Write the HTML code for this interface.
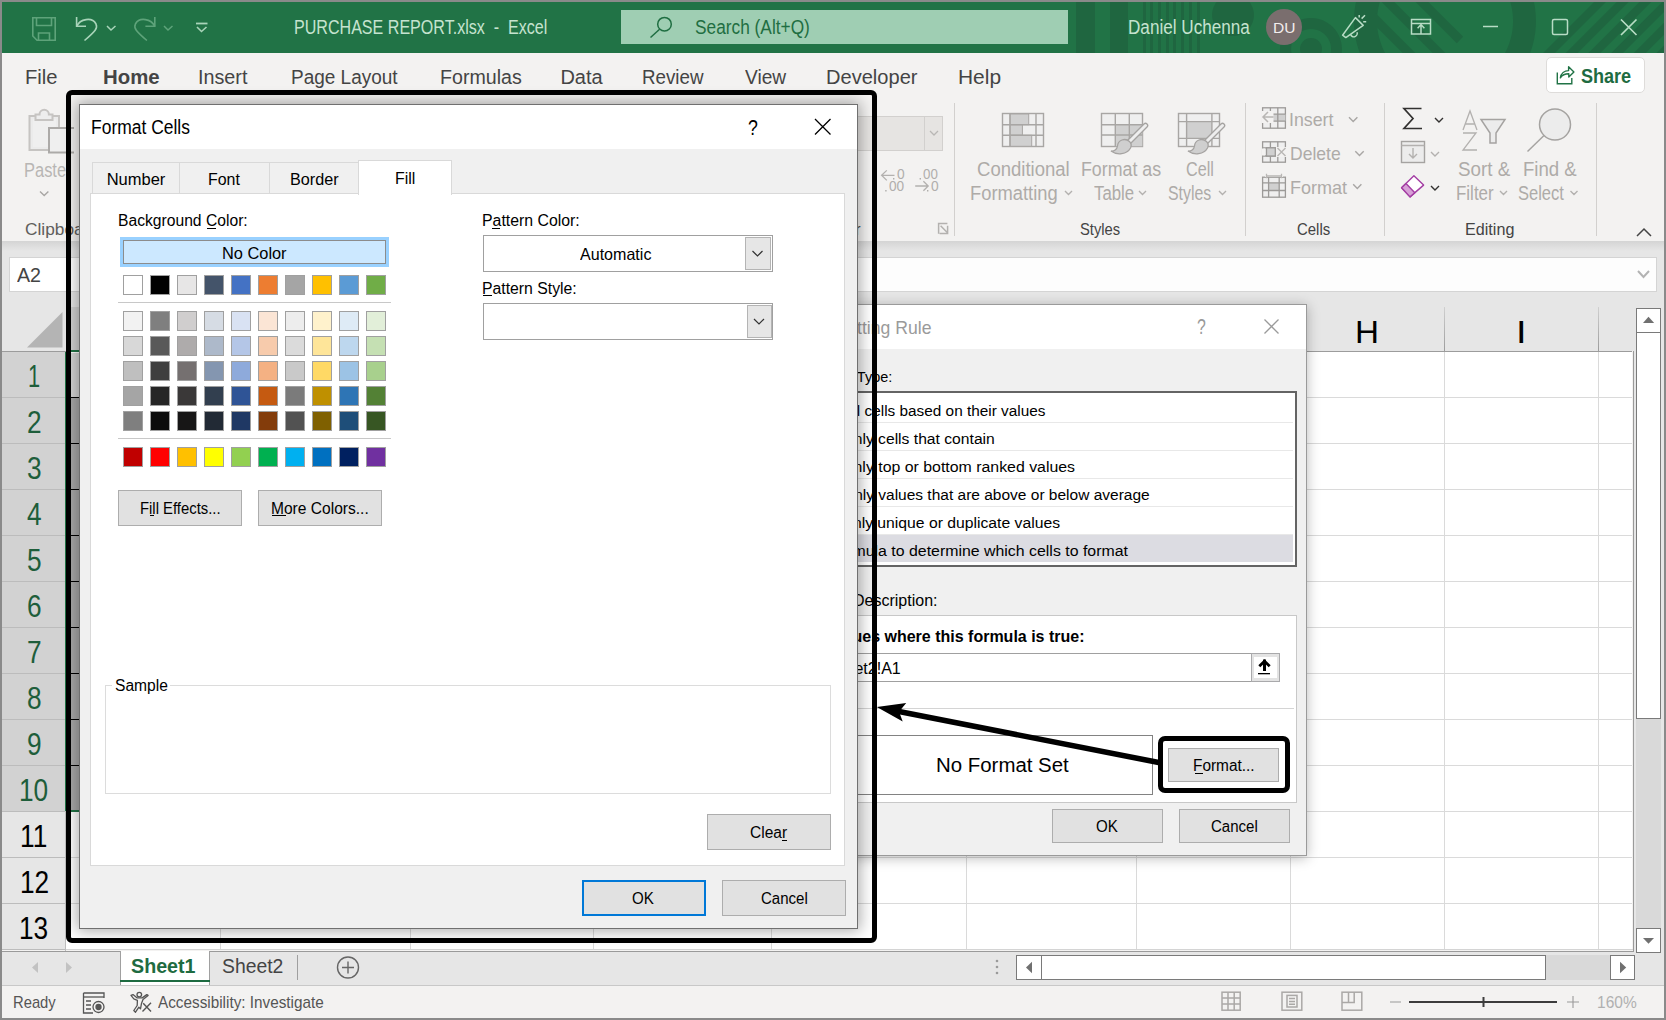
<!DOCTYPE html>
<html><head><meta charset="utf-8"><title>Excel - Format Cells</title>
<style>
html,body{margin:0;padding:0;width:1666px;height:1020px;overflow:hidden;background:#f3f2f1}
body{position:relative;font-family:"Liberation Sans",sans-serif}
.a{position:absolute}
.t{position:absolute;white-space:pre}
</style></head><body>
<div class="a" style="left:0px;top:0px;width:1666px;height:53px;background:#217346;"></div>
<svg class="a" style="left:0;top:0" width="1666" height="53" viewBox="0 0 1666 53">
<defs><clipPath id="tb"><rect x="0" y="2" width="1664" height="51"/></clipPath></defs>
<g clip-path="url(#tb)" fill="#1f6640">
<rect x="1076" y="0" width="19" height="53"/><rect x="1110" y="0" width="18" height="53"/>
<rect x="1143" y="0" width="3" height="53"/><rect x="1150" y="0" width="3" height="53"/><rect x="1158" y="0" width="3" height="53"/>
<rect x="1166" y="0" width="3" height="53"/><rect x="1173" y="0" width="3" height="53"/><rect x="1181" y="0" width="3" height="53"/>
<rect x="1189" y="0" width="3" height="53"/><rect x="1197" y="0" width="3" height="53"/>
<circle cx="1233" cy="15" r="21"/>
<path d="M1311 18 A31 31 0 1 1 1310.9 18 Z M1311 29 A20 20 0 1 0 1311.1 29 Z" fill-rule="evenodd"/>
<circle cx="1311" cy="49" r="11"/>
<path d="M1445 -70 A91 91 0 1 1 1444.9 -70 Z M1445 -47 A68 68 0 1 0 1445.1 -47 Z" fill-rule="evenodd"/>
<g fill="none" stroke="#1f6640" stroke-width="13">
<path d="M1366 10 L1426 70 M1383 -3 L1443 57 M1400 -20 L1460 40" stroke-width="9"/>
<path d="M1544.0 58 L1604.0 -2 M1566.7 58 L1626.7 -2 M1589.4 58 L1649.4 -2 M1612.1 58 L1672.1 -2 M1634.8 58 L1694.8 -2 M1657.5 58 L1717.5 -2" stroke-width="8.4"/>
</g>
</g>
</svg>
<svg class="a" style="left:0;top:0" width="240" height="53" viewBox="0 0 240 53" fill="none" stroke-width="1.6">
<g stroke="#5ea37a">
<path d="M32.8 17.8 H55.2 V40.2 H37 L32.8 36 Z"/>
<path d="M36.5 17.8 V25.5 H51.5 V17.8"/>
<path d="M38.5 40.2 V33 H49.5 V40.2"/>
</g>
<g stroke="#a9d4b9">
<path d="M76.6 17 V26.3 H86"/>
<path d="M76.6 26.3 C80 19 92 16.5 96 24 C98 28 95.5 31 84.5 40.5"/>
<path d="M107 26 L111 30 L115.5 26" stroke-width="1.5"/>
</g>
<g stroke="#5ea37a">
<path d="M154.8 17 V26.3 H145.4"/>
<path d="M154.8 26.3 C151.4 19 139.4 16.5 135.4 24 C133.4 28 135.9 31 146.9 40.5"/>
<path d="M164 26 L168 30 L172.5 26" stroke-width="1.5"/>
</g>
<g stroke="#a9d4b9">
<path d="M196 23.5 H207.5" stroke-width="1.8"/>
<path d="M197 27 L201.5 31.5 L206.5 27" stroke-width="1.6"/>
</g>
</svg>
<div class="t" style="left:293.71px;top:17px;font-size:20px;line-height:20px;color:#c5e3cf;transform:scaleX(0.8037);transform-origin:0 0;">PURCHASE REPORT.xlsx  -  Excel</div>
<div class="a" style="left:621px;top:10px;width:447px;height:34px;background:#9fceb3;"></div>
<svg class="a" style="left:640;top:10" width="40" height="36" viewBox="0 0 40 36" fill="none" stroke="#1f6e42" stroke-width="1.5">
<circle cx="24.5" cy="14.2" r="6.8"/><path d="M19.6 19.2 L10.5 27.5"/></svg>
<div class="t" style="left:694.72px;top:17px;font-size:20px;line-height:20px;color:#1f6e42;transform:scaleX(0.8646);transform-origin:0 0;">Search (Alt+Q)</div>
<div class="t" style="left:1127.63px;top:17px;font-size:20px;line-height:20px;color:#c5e3cf;transform:scaleX(0.8564);transform-origin:0 0;">Daniel Uchenna</div>
<div class="a" style="left:1266px;top:9px;width:36px;height:36px;border-radius:50%;background:#7a6e6e"></div>
<div class="t" style="left:1272.75px;top:20px;font-size:15.5px;line-height:15.5px;color:#f2eded;transform:scaleX(1.0041);transform-origin:0 0;">DU</div>
<svg class="a" style="left:1330;top:5" width="336" height="45" viewBox="1330 5 336 45" fill="none" stroke="#b8dcc5" stroke-width="1.5">
<path d="M1355.4 17.6 L1363.2 25.4 L1345.8 37.6 L1342.6 35.2 Z" stroke-linejoin="round"/><path d="M1350.6 34.6 A3.4 3.4 0 0 0 1357 32.2"/>
<path d="M1359.2 15 V17.6 M1361.6 18.6 L1365 15.2 M1363.2 21.8 H1366.2"/>
<rect x="1411.5" y="19.5" width="19" height="14.5"/><path d="M1411.5 23.5 H1430.5"/><path d="M1421 34 V24 M1417.6 28.2 L1421 24.6 L1424.4 28.2"/>
<path d="M1483 26.5 H1498"/>
<rect x="1552.5" y="19.5" width="15" height="15" rx="1.5"/>
<path d="M1621 19.5 L1636.5 35 M1636.5 19.5 L1621 35" stroke-width="1.7"/>
</svg>
<div class="a" style="left:0px;top:53px;width:1666px;height:188px;background:#f3f2f1;"></div>
<div class="t" style="left:25.38px;top:66.6px;font-size:20px;line-height:20px;color:#444;transform:scaleX(1.0101);transform-origin:0 0;">File</div>
<div class="t" style="left:102.68px;top:66.6px;font-size:20px;line-height:20px;color:#444;font-weight:700;transform:scaleX(1.0187);transform-origin:0 0;">Home</div>
<div class="t" style="left:198.22px;top:66.6px;font-size:20px;line-height:20px;color:#444;transform:scaleX(0.9875);transform-origin:0 0;">Insert</div>
<div class="t" style="left:290.98px;top:66.6px;font-size:20px;line-height:20px;color:#444;transform:scaleX(0.9494);transform-origin:0 0;">Page Layout</div>
<div class="t" style="left:439.93px;top:66.6px;font-size:20px;line-height:20px;color:#444;transform:scaleX(0.9803);transform-origin:0 0;">Formulas</div>
<div class="t" style="left:560.40px;top:66.6px;font-size:20px;line-height:20px;color:#444;">Data</div>
<div class="t" style="left:642.00px;top:66.6px;font-size:20px;line-height:20px;color:#444;transform:scaleX(0.9375);transform-origin:0 0;">Review</div>
<div class="t" style="left:744.90px;top:66.6px;font-size:20px;line-height:20px;color:#444;transform:scaleX(0.9557);transform-origin:0 0;">View</div>
<div class="t" style="left:826.39px;top:66.6px;font-size:20px;line-height:20px;color:#444;transform:scaleX(1.0034);transform-origin:0 0;">Developer</div>
<div class="t" style="left:958.33px;top:66.6px;font-size:20px;line-height:20px;color:#444;transform:scaleX(1.0465);transform-origin:0 0;">Help</div>
<div class="a" style="left:1546px;top:57px;width:99px;height:36px;background:#fff;border:1px solid #dedcda;box-sizing:border-box;border-radius:5px;"></div>
<svg class="a" style="left:1550;top:60" width="30" height="30" viewBox="1550 60 30 30" fill="none" stroke="#217346" stroke-width="1.4">
<path d="M1557.3 72.4 V83.8 H1571.8 V78.1"/>
<path d="M1560.4 77.8 C1561 73.2 1564.5 70.6 1568.6 70.6 V66.8 L1573.9 72 L1568.8 77 V73.8 C1565 73.8 1562 75.2 1560.4 77.8 Z" stroke-linejoin="round"/></svg>
<div class="t" style="left:1581.46px;top:65px;font-size:21px;line-height:21px;color:#1e6b41;font-weight:700;transform:scaleX(0.8594);transform-origin:0 0;">Share</div>
<svg class="a" style="left:14;top:100" width="60" height="110" viewBox="14 100 60 110" fill="none" stroke="#c6c4c2" stroke-width="2">
<rect x="29.5" y="116" width="29.5" height="34" fill="#ebebeb"/>
<rect x="33" y="119" width="23" height="28" fill="#efefef" stroke="none"/>
<path d="M35.5 114.5 H39.5 A4.7 4.7 0 0 1 48.9 114.5 H52.5 V120 H35.5 Z" fill="#ededed"/>
<rect x="49" y="128" width="30" height="24.5" fill="#efefef" stroke="#acaaa8"/>
<path d="M40 191.5 L44.2 195.5 L48.4 191.5" stroke="#a8a6a4" stroke-width="1.4"/></svg>
<div class="t" style="left:23.68px;top:160px;font-size:20px;line-height:20px;color:#b8b6b4;transform:scaleX(0.8230);transform-origin:0 0;">Paste</div>
<div class="t" style="left:25.14px;top:221px;font-size:17px;line-height:17px;color:#605e5c;transform:scaleX(1.0169);transform-origin:0 0;">Clipboard</div>
<div class="a" style="left:850px;top:116px;width:93px;height:35px;background:#e6e4e2;border:1px solid #d2d0ce;box-sizing:border-box;"></div>
<div class="a" style="left:924px;top:117px;width:1px;height:33px;background:#d2d0ce;"></div>
<svg class="a" style="left:925;top:117" width="18" height="33" viewBox="925 117 18 33" fill="none" stroke="#b9b7b5" stroke-width="1.3"><path d="M930 131 L934 135 L938 131"/></svg>
<svg class="a" style="left:875;top:165" width="80" height="80" viewBox="875 165 80 80" fill="none" stroke="#b3b1af" stroke-width="1.3">
<path d="M894.5 175.3 H881.5 M886.8 170.4 L881.6 175.3 L886.8 180.4"/><path d="M915.2 186 H928 M923.4 181.2 L928.2 186 L923.4 190.8"/>
<path d="M938.6 233.8 V223.6 H947.4 M940.6 225.8 L947 232.2 M939.6 233.6 H947.6 V225.8" stroke-width="1.5"/>
</svg>
<div class="t" style="left:896.65px;top:167.3px;font-size:14px;line-height:14px;color:#b0aeac;transform:scaleX(0.9821);transform-origin:0 0;">0</div>
<div class="t" style="left:889.16px;top:179.4px;font-size:14px;line-height:14px;color:#b0aeac;transform:scaleX(0.9731);transform-origin:0 0;">00</div>
<div class="t" style="left:923.27px;top:167.3px;font-size:14px;line-height:14px;color:#b0aeac;transform:scaleX(0.9524);transform-origin:0 0;">00</div>
<div class="t" style="left:930.75px;top:179.4px;font-size:14px;line-height:14px;color:#b0aeac;transform:scaleX(0.9821);transform-origin:0 0;">0</div>
<svg class="a" style="left:880;top:165" width="60" height="30" viewBox="880 165 60 30" fill="#b0aeac">
<rect x="893" y="178" width="1.4" height="1.5"/><rect x="885.2" y="190" width="1.4" height="1.5"/>
<rect x="919.6" y="178" width="1.4" height="1.5"/><rect x="927" y="190" width="1.4" height="1.5"/></svg>
<div class="t" style="left:804.23px;top:221px;font-size:17px;line-height:17px;color:#444;transform:scaleX(0.9351);transform-origin:0 0;">Number</div>
<div class="a" style="left:954px;top:103px;width:1px;height:133px;background:#d2d0ce;"></div>
<svg class="a" style="left:990;top:105" width="250" height="52" viewBox="990 105 250 52" fill="none" stroke="#a8a6a4" stroke-width="1.4">
<rect x="1002.5" y="113.5" width="41" height="33" fill="#efefef"/>
<rect x="1010" y="114" width="18.7" height="10.7" fill="#d0d0d0" stroke="#a8a6a4" stroke-width="1"/>
<rect x="1010" y="124.7" width="12.4" height="10.6" fill="#d0d0d0" stroke="#a8a6a4" stroke-width="1"/>
<rect x="1010" y="135.3" width="21.7" height="11" fill="#d0d0d0" stroke="#a8a6a4" stroke-width="1"/>
<path d="M1002.5 124.7 H1043.5 M1002.5 135.3 H1043.5 M1010 113.5 V146.5 M1036 113.5 V146.5"/>
<rect x="1101.5" y="113.5" width="41" height="33" fill="#efefef"/>
<rect x="1115.3" y="124.7" width="27" height="21.5" fill="#d0d0d0" stroke="none"/>
<path d="M1101.5 124.7 H1142.5 M1101.5 135 H1142.5 M1115.3 113.5 V146.5 M1129.3 113.5 V146.5"/>
<rect x="1178.5" y="113.5" width="41" height="33" fill="#efefef"/>
<rect x="1186.6" y="121.6" width="25.3" height="16.8" fill="#d0d0d0" stroke="none"/>
<path d="M1178.5 121.6 H1219.5 M1178.5 138.4 H1219.5 M1186.6 113.5 V146.5 M1211.9 113.5 V146.5"/>
<path d="M1145.5 125.5 L1127 144" stroke="#a5a3a1" stroke-width="5.6" stroke-linecap="round"/>
<path d="M1145.5 125.5 L1127 144" stroke="#eeeeee" stroke-width="3" stroke-linecap="round"/>
<path d="M1129.5 141.5 C1125 137.5 1118 140 1117.5 146 C1117 149.5 1114 151.5 1111 151 C1117 155.5 1127 154.5 1130.5 148 C1131.5 146 1131.5 143.5 1129.5 141.5 Z" fill="#cfcfcf" stroke="#a5a3a1" stroke-width="1.3"/>
<path d="M1222.5 125.5 L1204 144" stroke="#a5a3a1" stroke-width="5.6" stroke-linecap="round"/>
<path d="M1222.5 125.5 L1204 144" stroke="#eeeeee" stroke-width="3" stroke-linecap="round"/>
<path d="M1206.5 141.5 C1202 137.5 1195 140 1194.5 146 C1194 149.5 1191 151.5 1188 151 C1194 155.5 1204 154.5 1207.5 148 C1208.5 146 1208.5 143.5 1206.5 141.5 Z" fill="#cfcfcf" stroke="#a5a3a1" stroke-width="1.3"/>
</svg>
<div class="t" style="left:976.57px;top:159px;font-size:20px;line-height:20px;color:#aeaba8;transform:scaleX(0.9263);transform-origin:0 0;">Conditional</div>
<div class="t" style="left:969.83px;top:183px;font-size:20px;line-height:20px;color:#aeaba8;transform:scaleX(0.9169);transform-origin:0 0;">Formatting</div>
<div class="t" style="left:1081.08px;top:159px;font-size:20px;line-height:20px;color:#aeaba8;transform:scaleX(0.8894);transform-origin:0 0;">Format as</div>
<div class="t" style="left:1093.66px;top:183px;font-size:20px;line-height:20px;color:#aeaba8;transform:scaleX(0.8387);transform-origin:0 0;">Table</div>
<div class="t" style="left:1185.69px;top:159px;font-size:20px;line-height:20px;color:#aeaba8;transform:scaleX(0.8100);transform-origin:0 0;">Cell</div>
<div class="t" style="left:1167.79px;top:183px;font-size:20px;line-height:20px;color:#aeaba8;transform:scaleX(0.7940);transform-origin:0 0;">Styles</div>
<svg class="a" style="left:960;top:185" width="280" height="20" viewBox="960 185 280 20" fill="none" stroke="#b3b1af" stroke-width="1.4">
<path d="M1065 191 L1068.5 194.5 L1072 191"/><path d="M1139 191 L1142.5 194.5 L1146 191"/><path d="M1219 191 L1222.5 194.5 L1226 191"/></svg>
<div class="t" style="left:1079.84px;top:221px;font-size:17px;line-height:17px;color:#444;transform:scaleX(0.8673);transform-origin:0 0;">Styles</div>
<div class="a" style="left:1245px;top:103px;width:1px;height:133px;background:#d2d0ce;"></div>
<svg class="a" style="left:1255;top:100" width="120" height="110" viewBox="1255 100 120 110" fill="none" stroke="#9c9a98" stroke-width="1.3">
<rect x="1262.6" y="107.8" width="22.8" height="20.4" fill="#efefef"/>
<rect x="1270.4" y="114.2" width="15" height="6.9" fill="#d0d0d0" stroke="none"/>
<path d="M1262.6 114.2 H1285.4 M1262.6 121.1 H1285.4 M1270.4 107.8 V128.2 M1277.8 107.8 V128.2"/>
<rect x="1261.5" y="111" width="12" height="12" fill="#f3f2f1" stroke="none"/>
<path d="M1273.5 117 H1263 M1268 112 L1263 117 L1268 122" stroke="#b8b6b4" stroke-width="1.5"/>
<rect x="1262.6" y="141.8" width="22.8" height="20.4" fill="#efefef"/>
<path d="M1262.6 147.8 H1285.4 M1262.6 156 H1285.4 M1270.4 141.8 V162.2 M1277.8 141.8 V162.2"/>
<rect x="1262" y="148.5" width="3" height="7" fill="#f3f2f1" stroke="none"/>
<rect x="1276" y="147" width="11" height="10" fill="#f3f2f1" stroke="none"/>
<rect x="1266.5" y="147.8" width="8.8" height="8.2" fill="#d0d0d0"/>
<path d="M1277.5 148 L1285.5 156 M1285.5 148 L1277.5 156" stroke="#b8b6b4" stroke-width="1.4"/>
<rect x="1262.6" y="177.2" width="22.8" height="20" fill="#efefef"/>
<rect x="1268.6" y="182.8" width="10.6" height="7.7" fill="#d0d0d0" stroke="none"/>
<path d="M1262.6 182.8 H1285.4 M1262.6 190.5 H1285.4 M1268.6 177.2 V197.2 M1279.2 177.2 V197.2"/>
<rect x="1265" y="173" width="18" height="4" fill="#f3f2f1" stroke="none"/>
<path d="M1266.5 176 H1281.5 M1266.5 173.8 V178.2 M1281.5 173.8 V178.2" stroke="#b8b6b4"/>
<path d="M1349 117.2 L1353.2 121.4 L1357.4 117.2 M1355.3 151.2 L1359.5 155.4 L1363.7 151.2 M1353.2 184.3 L1357.3 188.5 L1361.4 184.3" stroke="#a8a6a4" stroke-width="1.4"/>
</svg>
<div class="t" style="left:1289.40px;top:109.7px;font-size:19px;line-height:19px;color:#aeaba8;transform:scaleX(0.9345);transform-origin:0 0;">Insert</div>
<div class="t" style="left:1289.60px;top:143.7px;font-size:19px;line-height:19px;color:#aeaba8;transform:scaleX(0.9232);transform-origin:0 0;">Delete</div>
<div class="t" style="left:1289.56px;top:177.8px;font-size:19px;line-height:19px;color:#aeaba8;transform:scaleX(0.9484);transform-origin:0 0;">Format</div>
<div class="t" style="left:1297.25px;top:221px;font-size:17px;line-height:17px;color:#444;transform:scaleX(0.8796);transform-origin:0 0;">Cells</div>
<div class="a" style="left:1384px;top:103px;width:1px;height:133px;background:#d2d0ce;"></div>
<svg class="a" style="left:1395;top:100" width="200" height="110" viewBox="1395 100 200 110" fill="none" stroke-width="1.4">
<path d="M1421.5 108.5 H1404 L1413 118.5 L1404 128.5 H1422" stroke="#323130" stroke-width="1.7"/>
<path d="M1435 118 L1439 122 L1443 118" stroke="#323130"/>
<rect x="1401.5" y="141.5" width="23" height="21" stroke="#a5a3a1" fill="#ececec"/><path d="M1401.5 145.5 H1424.5 M1413 148 V158 M1409 154 L1413 158 L1417 154" stroke="#b3b1af"/>
<path d="M1431 152 L1435 156 L1439 152" stroke="#b3b1af"/>
<path d="M1413.9 175.7 L1423.6 185.1 L1410 196.9 L1401.6 187.7 Z" stroke="#a33da3" fill="#fff" stroke-linejoin="round"/>
<path d="M1401.6 187.7 L1406 183.4 L1414.8 192.8 L1410 196.9 Z" fill="#d7a0d7" stroke="#a33da3" stroke-linejoin="round"/>
<path d="M1431 186 L1435 190 L1439 186" stroke="#323130"/>
<g stroke="#b3b1af" stroke-width="1.3">
<path d="M1463 130 L1470 111 L1477 130 M1465.5 124 H1474.5"/>
<path d="M1463 133 H1476 L1463 150 H1477"/>
<path d="M1481 119.5 H1505 L1496 133 V143 H1490 V133 Z" fill="#ececec" stroke="#a5a3a1" stroke-width="1.5"/>
<circle cx="1555" cy="124.5" r="15.5" fill="#ececec" stroke="#a5a3a1" stroke-width="1.5"/><path d="M1544 135.5 L1527.5 151.5" stroke="#a5a3a1" stroke-width="1.5"/>
<path d="M1570.5 191 L1574 194.5 L1577.5 191 M1500 191 L1503.5 194.5 L1507 191" stroke-width="1.4"/>
</g></svg>
<div class="t" style="left:1458.15px;top:159px;font-size:20px;line-height:20px;color:#aeaba8;transform:scaleX(0.9392);transform-origin:0 0;">Sort &amp;</div>
<div class="t" style="left:1456.14px;top:183px;font-size:20px;line-height:20px;color:#aeaba8;transform:scaleX(0.8471);transform-origin:0 0;">Filter</div>
<div class="t" style="left:1522.51px;top:159px;font-size:20px;line-height:20px;color:#aeaba8;transform:scaleX(0.9302);transform-origin:0 0;">Find &amp;</div>
<div class="t" style="left:1518.26px;top:183px;font-size:20px;line-height:20px;color:#aeaba8;transform:scaleX(0.8257);transform-origin:0 0;">Select</div>
<div class="t" style="left:1465.21px;top:221px;font-size:17px;line-height:17px;color:#444;transform:scaleX(0.9501);transform-origin:0 0;">Editing</div>
<div class="a" style="left:1596px;top:103px;width:1px;height:133px;background:#d2d0ce;"></div>
<svg class="a" style="left:1630;top:220" width="30" height="20" viewBox="1630 220 30 20" fill="none" stroke="#444" stroke-width="1.5"><path d="M1637 236 L1644 229 L1651 236"/></svg>
<div class="a" style="left:0px;top:241px;width:1666px;height:110px;background:#e6e6e6;"></div>
<div class="a" style="left:0;top:241px;width:1666px;height:10px;background:linear-gradient(#d4d4d4,#e6e6e6)"></div>
<div class="a" style="left:9px;top:257px;width:250px;height:35px;background:#fff;border:1px solid #d4d4d4;box-sizing:border-box;"></div>
<div class="t" style="left:16.50px;top:265px;font-size:20px;line-height:20px;color:#444;transform:scaleX(0.9829);transform-origin:0 0;">A2</div>
<div class="a" style="left:260px;top:257px;width:1397px;height:35px;background:#fdfdfd;border:1px solid #d4d4d4;box-sizing:border-box;"></div>
<svg class="a" style="left:1630;top:262" width="30" height="25" viewBox="1630 262 30 25" fill="none" stroke="#b3b3b3" stroke-width="2"><path d="M1638 271 L1643.5 277 L1649 271"/></svg>
<div class="a" style="left:2px;top:292px;width:1630px;height:59px;background:#e6e6e6;"></div>
<div class="a" style="left:2px;top:351px;width:64px;height:599px;background:#e6e6e6;"></div>
<div class="a" style="left:66px;top:351px;width:1566px;height:599px;background:#fff;"></div>
<div class="a" style="left:2px;top:351px;width:63px;height:460px;background:#d2d2d2;"></div>
<div class="a" style="left:65px;top:351px;width:1px;height:460px;background:#217346;"></div>
<div class="a" style="left:65px;top:811px;width:1px;height:140px;background:#bdbdbd;"></div>
<div class="a" style="left:66px;top:397px;width:1566px;height:1px;background:#dadada"></div><div class="a" style="left:2px;top:397px;width:63px;height:1px;background:#bcbcbc"></div><div class="a" style="left:66px;top:443px;width:1566px;height:1px;background:#dadada"></div><div class="a" style="left:2px;top:443px;width:63px;height:1px;background:#bcbcbc"></div><div class="a" style="left:66px;top:489px;width:1566px;height:1px;background:#dadada"></div><div class="a" style="left:2px;top:489px;width:63px;height:1px;background:#bcbcbc"></div><div class="a" style="left:66px;top:535px;width:1566px;height:1px;background:#dadada"></div><div class="a" style="left:2px;top:535px;width:63px;height:1px;background:#bcbcbc"></div><div class="a" style="left:66px;top:581px;width:1566px;height:1px;background:#dadada"></div><div class="a" style="left:2px;top:581px;width:63px;height:1px;background:#bcbcbc"></div><div class="a" style="left:66px;top:627px;width:1566px;height:1px;background:#dadada"></div><div class="a" style="left:2px;top:627px;width:63px;height:1px;background:#bcbcbc"></div><div class="a" style="left:66px;top:673px;width:1566px;height:1px;background:#dadada"></div><div class="a" style="left:2px;top:673px;width:63px;height:1px;background:#bcbcbc"></div><div class="a" style="left:66px;top:719px;width:1566px;height:1px;background:#dadada"></div><div class="a" style="left:2px;top:719px;width:63px;height:1px;background:#bcbcbc"></div><div class="a" style="left:66px;top:765px;width:1566px;height:1px;background:#dadada"></div><div class="a" style="left:2px;top:765px;width:63px;height:1px;background:#bcbcbc"></div><div class="a" style="left:66px;top:811px;width:1566px;height:1px;background:#dadada"></div><div class="a" style="left:2px;top:811px;width:63px;height:1px;background:#bcbcbc"></div><div class="a" style="left:66px;top:857px;width:1566px;height:1px;background:#dadada"></div><div class="a" style="left:2px;top:857px;width:63px;height:1px;background:#bcbcbc"></div><div class="a" style="left:66px;top:903px;width:1566px;height:1px;background:#dadada"></div><div class="a" style="left:2px;top:903px;width:63px;height:1px;background:#bcbcbc"></div><div class="a" style="left:66px;top:949px;width:1566px;height:1px;background:#dadada"></div><div class="a" style="left:2px;top:949px;width:63px;height:1px;background:#bcbcbc"></div><div class="a" style="left:220px;top:351px;width:1px;height:599px;background:#dadada"></div><div class="a" style="left:220px;top:307px;width:1px;height:44px;background:linear-gradient(#d0d0d0,#9c9c9c)"></div><div class="a" style="left:410px;top:351px;width:1px;height:599px;background:#dadada"></div><div class="a" style="left:410px;top:307px;width:1px;height:44px;background:linear-gradient(#d0d0d0,#9c9c9c)"></div><div class="a" style="left:593px;top:351px;width:1px;height:599px;background:#dadada"></div><div class="a" style="left:593px;top:307px;width:1px;height:44px;background:linear-gradient(#d0d0d0,#9c9c9c)"></div><div class="a" style="left:771px;top:351px;width:1px;height:599px;background:#dadada"></div><div class="a" style="left:771px;top:307px;width:1px;height:44px;background:linear-gradient(#d0d0d0,#9c9c9c)"></div><div class="a" style="left:966px;top:351px;width:1px;height:599px;background:#dadada"></div><div class="a" style="left:966px;top:307px;width:1px;height:44px;background:linear-gradient(#d0d0d0,#9c9c9c)"></div><div class="a" style="left:1136px;top:351px;width:1px;height:599px;background:#dadada"></div><div class="a" style="left:1136px;top:307px;width:1px;height:44px;background:linear-gradient(#d0d0d0,#9c9c9c)"></div><div class="a" style="left:1290px;top:351px;width:1px;height:599px;background:#dadada"></div><div class="a" style="left:1290px;top:307px;width:1px;height:44px;background:linear-gradient(#d0d0d0,#9c9c9c)"></div><div class="a" style="left:1444px;top:351px;width:1px;height:599px;background:#dadada"></div><div class="a" style="left:1444px;top:307px;width:1px;height:44px;background:linear-gradient(#d0d0d0,#9c9c9c)"></div><div class="a" style="left:1598px;top:351px;width:1px;height:599px;background:#dadada"></div><div class="a" style="left:1598px;top:307px;width:1px;height:44px;background:linear-gradient(#d0d0d0,#9c9c9c)"></div>
<div class="a" style="left:66px;top:351px;width:1566px;height:1px;background:#9c9c9c;"></div>
<div class="a" style="left:2px;top:351px;width:64px;height:1px;background:#9c9c9c;"></div>
<svg class="a" style="left:20;top:305" width="46" height="46" viewBox="20 305 46 46"><path d="M62.5 312 V347.5 H27 Z" fill="#b4b4b4"/></svg>
<div class="a" style="left:66px;top:307px;width:154px;height:44px;background:#d2d2d2;"></div>
<div class="a" style="left:66px;top:350px;width:154px;height:2px;background:#217346;"></div>
<div class="a" style="left:66px;top:352px;width:154px;height:45px;background:#d4d4d4;"></div>
<div class="a" style="left:66px;top:352px;width:154px;height:1px;background:#ffffff;"></div>
<div class="a" style="left:66px;top:398px;width:154px;height:412px;background:#a8a8a8;"></div>
<div class="a" style="left:66px;top:443px;width:154px;height:1px;background:#000;"></div>
<div class="a" style="left:66px;top:489px;width:154px;height:1px;background:#000;"></div>
<div class="a" style="left:66px;top:535px;width:154px;height:1px;background:#000;"></div>
<div class="a" style="left:66px;top:581px;width:154px;height:1px;background:#000;"></div>
<div class="a" style="left:66px;top:627px;width:154px;height:1px;background:#000;"></div>
<div class="a" style="left:66px;top:673px;width:154px;height:1px;background:#000;"></div>
<div class="a" style="left:66px;top:719px;width:154px;height:1px;background:#000;"></div>
<div class="a" style="left:66px;top:765px;width:154px;height:1px;background:#000;"></div>
<div class="a" style="left:66px;top:397px;width:154px;height:1px;background:#000;"></div>
<div class="a" style="left:66px;top:810px;width:154px;height:2px;background:#217346;"></div>
<div class="t" style="left:1355.34px;top:316px;font-size:32px;line-height:32px;color:#000;transform:scaleX(1.0379);transform-origin:0 0;">H</div>
<div class="t" style="left:1516.09px;top:316px;font-size:32px;line-height:32px;color:#000;transform:scaleX(1.1842);transform-origin:0 0;">I</div>
<div class="t" style="left:28.01px;top:360px;font-size:32px;line-height:32px;color:#1e5e3b;transform:scaleX(0.6825);transform-origin:0 0;">1</div>
<div class="t" style="left:27.12px;top:406px;font-size:32px;line-height:32px;color:#1e5e3b;transform:scaleX(0.8200);transform-origin:0 0;">2</div>
<div class="t" style="left:27.12px;top:452px;font-size:32px;line-height:32px;color:#1e5e3b;transform:scaleX(0.8200);transform-origin:0 0;">3</div>
<div class="t" style="left:27.25px;top:498px;font-size:32px;line-height:32px;color:#1e5e3b;transform:scaleX(0.8200);transform-origin:0 0;">4</div>
<div class="t" style="left:27.12px;top:544px;font-size:32px;line-height:32px;color:#1e5e3b;transform:scaleX(0.8200);transform-origin:0 0;">5</div>
<div class="t" style="left:26.99px;top:590px;font-size:32px;line-height:32px;color:#1e5e3b;transform:scaleX(0.8200);transform-origin:0 0;">6</div>
<div class="t" style="left:27.12px;top:636px;font-size:32px;line-height:32px;color:#1e5e3b;transform:scaleX(0.8200);transform-origin:0 0;">7</div>
<div class="t" style="left:27.05px;top:682px;font-size:32px;line-height:32px;color:#1e5e3b;transform:scaleX(0.8200);transform-origin:0 0;">8</div>
<div class="t" style="left:27.12px;top:728px;font-size:32px;line-height:32px;color:#1e5e3b;transform:scaleX(0.8200);transform-origin:0 0;">9</div>
<div class="t" style="left:19.31px;top:774px;font-size:32px;line-height:32px;color:#1e5e3b;transform:scaleX(0.8200);transform-origin:0 0;">10</div>
<div class="t" style="left:20.43px;top:820px;font-size:32px;line-height:32px;color:#000;transform:scaleX(0.8200);transform-origin:0 0;">11</div>
<div class="t" style="left:19.51px;top:866px;font-size:32px;line-height:32px;color:#000;transform:scaleX(0.8200);transform-origin:0 0;">12</div>
<div class="t" style="left:19.38px;top:912px;font-size:32px;line-height:32px;color:#000;transform:scaleX(0.8200);transform-origin:0 0;">13</div>
<div class="a" style="left:1634px;top:292px;width:30px;height:693px;background:#e6e6e6;"></div>
<div class="a" style="left:1633px;top:351px;width:1px;height:601px;background:#9a9a9a;"></div>
<div class="a" style="left:66px;top:951px;width:1568px;height:1px;background:#9a9a9a;"></div>
<div class="a" style="left:1636px;top:332px;width:25px;height:596px;background:#d9d9d9;"></div>
<div class="a" style="left:1636px;top:308px;width:25px;height:25px;background:#fff;border:1px solid #7a7a7a;box-sizing:border-box;"></div>
<div class="a" style="left:1636px;top:332px;width:25px;height:387px;background:#fff;border:1px solid #7a7a7a;box-sizing:border-box;"></div>
<div class="a" style="left:1636px;top:928px;width:25px;height:25px;background:#fff;border:1px solid #7a7a7a;box-sizing:border-box;"></div>
<svg class="a" style="left:1636;top:308" width="26" height="650" viewBox="1636 308 26 650" fill="#707070">
<path d="M1643 323 L1648.5 316.7 L1654.2 323 Z"/><path d="M1643 938 L1648.5 943.8 L1654 938 Z"/></svg>
<div class="a" style="left:66px;top:949px;width:1567px;height:1px;background:#d4d4d4;"></div>
<div class="a" style="left:2px;top:952px;width:1632px;height:33px;background:#e6e6e6;"></div>
<div class="a" style="left:2px;top:951px;width:1632px;height:1px;background:#9a9a9a;"></div>
<svg class="a" style="left:20;top:955" width="70" height="26" viewBox="20 955 70 26" fill="#c2c2c2"><path d="M38 962 L32 967.5 L38 973 Z"/><path d="M66 962 L72 967.5 L66 973 Z"/></svg>
<div class="a" style="left:120px;top:951px;width:90px;height:34px;background:#fff;border:1px solid #a0a0a0;box-sizing:border-box;border-top:none;border-bottom:none;"></div>
<div class="a" style="left:120px;top:980px;width:90px;height:2px;background:#1e6b41;"></div>
<div class="t" style="left:131.41px;top:956px;font-size:20px;line-height:20px;color:#1e6b41;font-weight:700;transform:scaleX(0.9845);transform-origin:0 0;">Sheet1</div>
<div class="t" style="left:222.13px;top:956px;font-size:20px;line-height:20px;color:#444;transform:scaleX(0.9675);transform-origin:0 0;">Sheet2</div>
<div class="a" style="left:297px;top:955px;width:1px;height:25px;background:#9f9f9f;"></div>
<svg class="a" style="left:330;top:950" width="36" height="36" viewBox="330 950 36 36" fill="none" stroke="#666" stroke-width="1.4"><circle cx="348" cy="967.5" r="10.5"/><path d="M342 967.5 H354 M348 961.5 V973.5"/></svg>
<svg class="a" style="left:990;top:955" width="20" height="26" viewBox="990 955 20 26" fill="#9a9a9a"><circle cx="997" cy="961" r="1.3"/><circle cx="997" cy="967" r="1.3"/><circle cx="997" cy="973" r="1.3"/></svg>
<div class="a" style="left:1016px;top:955px;width:594px;height:25px;background:#d9d9d9;"></div>
<div class="a" style="left:1041px;top:955px;width:505px;height:25px;background:#fff;border:1px solid #7a7a7a;box-sizing:border-box;"></div>
<div class="a" style="left:1016px;top:955px;width:26px;height:25px;background:#fff;border:1px solid #7a7a7a;box-sizing:border-box;"></div>
<div class="a" style="left:1610px;top:955px;width:25px;height:25px;background:#fff;border:1px solid #7a7a7a;box-sizing:border-box;"></div>
<svg class="a" style="left:1016;top:955" width="630" height="26" viewBox="1016 955 630 26" fill="#707070"><path d="M1032 961.8 L1026 967.5 L1032 973.3 Z"/><path d="M1620 961.8 L1626.2 967.5 L1620 973.3 Z"/></svg>
<div class="a" style="left:2px;top:985px;width:1664px;height:33px;background:#f3f2f1;"></div>
<div class="a" style="left:2px;top:985px;width:1662px;height:1px;background:#c8c8c8;"></div>
<div class="t" style="left:12.82px;top:994px;font-size:17px;line-height:17px;color:#555;transform:scaleX(0.8687);transform-origin:0 0;">Ready</div>
<svg class="a" style="left:78;top:988" width="300" height="28" viewBox="78 988 300 28" fill="none" stroke="#555" stroke-width="1.3">
<path d="M83.5 993 H104 V998 M83.5 993 V1013 H93"/><path d="M83.5 997 H104"/><path d="M86 1001 H91 M86 1005 H91 M86 1009 H91"/>
<circle cx="98.5" cy="1007" r="5.5"/><circle cx="98.5" cy="1007" r="2.5" fill="#555"/>
<circle cx="139.3" cy="994.6" r="2.3"/>
<path d="M131 995.4 L133.8 998.8 L137.4 1000.4 L137.2 1005.5 L133.8 1010.5 L135.5 1012.2 L138.9 1007.2 L140.5 1008.9 L141.4 1003.8 L143 999.6 L148.1 995.4 L146.8 994.6 L142.2 997.9 L137.2 997.9 L133 994.6 Z" stroke-linejoin="round"/>
<path d="M142.5 1011.4 L151 1002.8 M143.2 1003.2 L151 1011.6" stroke-width="1.4"/>
</svg>
<div class="t" style="left:157.50px;top:994px;font-size:17px;line-height:17px;color:#555;transform:scaleX(0.8995);transform-origin:0 0;">Accessibility: Investigate</div>
<svg class="a" style="left:1210;top:985" width="456" height="33" viewBox="1210 985 456 33" fill="none" stroke="#9a9a9a" stroke-width="1.2">
<g stroke="#aaa8a6" stroke-width="1.5">
<rect x="1222" y="992.2" width="18.2" height="18"/><path d="M1222 998 H1240.2 M1222 1004 H1240.2 M1228 992.2 V1010.2 M1234.2 992.2 V1010.2"/>
<rect x="1282" y="992.2" width="19.8" height="18"/><rect x="1287" y="995.4" width="10" height="11.6"/><path d="M1289 998.6 H1295 M1289 1001.4 H1295 M1289 1004.2 H1295"/>
<rect x="1342" y="992.2" width="19.8" height="18"/><path d="M1342 1002.4 H1354.2 V992.2 M1348.5 992.2 V1002.4"/>
</g>
<path d="M1390 1002 H1401 M1567 1002 H1579 M1573 996 V1008" stroke-width="1.1"/>
<path d="M1409 1002 H1557" stroke="#3c3c3c" stroke-width="2"/><path d="M1483.5 997 V1007" stroke="#3c3c3c" stroke-width="2"/>
</svg>
<div class="t" style="left:1596.84px;top:994px;font-size:17px;line-height:17px;color:#b0b0b0;transform:scaleX(0.9124);transform-origin:0 0;">160%</div>
<div class="a" style="left:0;top:0;width:1666px;height:1020px;box-sizing:border-box;border:2px solid #8a8a8a;pointer-events:none"></div>
<div class="a" style="left:640px;top:304px;width:667px;height:552px;background:#f0f0f0;border:1px solid #9a9a9a;box-sizing:border-box;box-shadow:0 2px 12px rgba(0,0,0,0.28)"></div>
<div class="a" style="left:641px;top:305px;width:665px;height:44px;background:#fff;"></div>
<div class="t" style="left:765.67px;top:318.8px;font-size:18.5px;line-height:18.5px;color:#9a9a9a;transform:scaleX(0.9526);transform-origin:0 0;">New Formatting Rule</div>
<svg class="a" style="left:1190;top:312" width="100" height="30" viewBox="1190 312 100 30" fill="none" stroke="#9a9a9a" stroke-width="1.3">
<path d="M1264.5 319.5 L1278.5 333.5 M1278.5 319.5 L1264.5 333.5"/></svg>
<div class="t" style="left:1196.97px;top:317px;font-size:21.5px;line-height:21.5px;color:#9a9a9a;transform:scaleX(0.7364);transform-origin:0 0;">?</div>
<div class="t" style="left:766.99px;top:369.2px;font-size:15.5px;line-height:15.5px;color:#000;transform:scaleX(0.9339);transform-origin:0 0;">Select a Rule Type:</div>
<div class="a" style="left:660px;top:391px;width:637px;height:176px;background:#fff;border:2px solid #646464;box-sizing:border-box;"></div>
<div class="a" style="left:661px;top:422px;width:632px;height:1px;background:#e8e8e8;"></div>
<div class="t" style="left:791.56px;top:403.2px;font-size:15.5px;line-height:15.5px;color:#000;transform:scaleX(0.9906);transform-origin:0 0;">Format all cells based on their values</div>
<div class="a" style="left:661px;top:450px;width:632px;height:1px;background:#e8e8e8;"></div>
<div class="t" style="left:790.69px;top:431.2px;font-size:15.5px;line-height:15.5px;color:#000;transform:scaleX(1.0110);transform-origin:0 0;">Format only cells that contain</div>
<div class="a" style="left:661px;top:478px;width:632px;height:1px;background:#e8e8e8;"></div>
<div class="t" style="left:789.83px;top:459.2px;font-size:15.5px;line-height:15.5px;color:#000;transform:scaleX(1.0243);transform-origin:0 0;">Format only top or bottom ranked values</div>
<div class="a" style="left:661px;top:506px;width:632px;height:1px;background:#e8e8e8;"></div>
<div class="t" style="left:792.13px;top:487.2px;font-size:15.5px;line-height:15.5px;color:#000;">Format only values that are above or below average</div>
<div class="a" style="left:661px;top:534px;width:632px;height:1px;background:#e8e8e8;"></div>
<div class="t" style="left:790.22px;top:515.2px;font-size:15.5px;line-height:15.5px;color:#000;transform:scaleX(1.0142);transform-origin:0 0;">Format only unique or duplicate values</div>
<div class="a" style="left:661px;top:535px;width:632px;height:27px;background:#dcdce2;"></div>
<div class="t" style="left:788.21px;top:543.2px;font-size:15.5px;line-height:15.5px;color:#000;transform:scaleX(1.0249);transform-origin:0 0;">Use a formula to determine which cells to format</div>
<div class="t" style="left:756.96px;top:593px;font-size:16px;line-height:16px;color:#000;">Edit the Rule Description:</div>
<div class="a" style="left:660px;top:615px;width:637px;height:188px;background:#fff;border:1px solid #c8c8c8;box-sizing:border-box;"></div>
<div class="t" style="left:771.56px;top:629px;font-size:16px;line-height:16px;color:#000;font-weight:700;">Format values where this formula is true:</div>
<div class="a" style="left:700px;top:653px;width:580px;height:29px;background:#fff;border:1px solid #a0a0a0;box-sizing:border-box;"></div>
<div class="a" style="left:1251px;top:653px;width:29px;height:29px;background:#e3e3e3;border:1px solid #a9a9ab;box-sizing:border-box;"></div>
<div class="a" style="left:1254px;top:657px;width:23px;height:21px;background:#fff;"></div>
<svg class="a" style="left:1252;top:655" width="26" height="26" viewBox="1252 655 26 26"><path d="M1264.5 659.5 V671" stroke="#000" stroke-width="3"/><path d="M1259.3 666.3 L1264.5 661.3 L1269.7 666.3" stroke="#000" stroke-width="2.8" fill="none"/><rect x="1258" y="673" width="12" height="1.3" fill="#000"/></svg>
<div class="t" style="left:816.64px;top:661px;font-size:16px;line-height:16px;color:#000;">=Sheet2!A1</div>
<div class="a" style="left:662px;top:708px;width:632px;height:1px;background:#d4d4d4;"></div>
<div class="a" style="left:700px;top:735px;width:453px;height:60px;background:#fff;border:1px solid #828282;box-sizing:border-box;"></div>
<div class="t" style="left:935.87px;top:755px;font-size:20px;line-height:20px;color:#000;transform:scaleX(1.0210);transform-origin:0 0;">No Format Set</div>
<div class="a" style="left:1168px;top:748px;width:111px;height:34px;background:#e1e1e1;border:1px solid #adadad;box-sizing:border-box;"></div>
<div class="t" style="left:1192.77px;top:757.8px;font-size:16px;line-height:16px;color:#000;transform:scaleX(0.9628);transform-origin:0 0;">Format...</div>
<div class="a" style="left:1194.5px;top:772.5px;width:8px;height:1px;background:#000;"></div>
<div class="a" style="left:1052px;top:809px;width:111px;height:34px;background:#e1e1e1;border:1px solid #adadad;box-sizing:border-box;"></div>
<div class="t" style="left:1095.82px;top:819px;font-size:16px;line-height:16px;color:#000;transform:scaleX(0.9442);transform-origin:0 0;">OK</div>
<div class="a" style="left:1179px;top:809px;width:111px;height:34px;background:#e1e1e1;border:1px solid #adadad;box-sizing:border-box;"></div>
<div class="t" style="left:1210.75px;top:819px;font-size:16px;line-height:16px;color:#000;transform:scaleX(0.9391);transform-origin:0 0;">Cancel</div>
<div class="a" style="left:79px;top:104px;width:779px;height:825px;background:#f0f0f0;border:1px solid #707070;box-sizing:border-box;box-shadow:0 0 14px 2px rgba(0,0,0,0.33)"></div>
<div class="a" style="left:80px;top:105px;width:777px;height:44px;background:#fff;"></div>
<div class="t" style="left:90.80px;top:117px;font-size:20px;line-height:20px;color:#000;transform:scaleX(0.8731);transform-origin:0 0;">Format Cells</div>
<div class="t" style="left:747.84px;top:117.5px;font-size:21.5px;line-height:21.5px;color:#000;transform:scaleX(0.8236);transform-origin:0 0;">?</div>
<svg class="a" style="left:805;top:110" width="40" height="34" viewBox="805 110 40 34" fill="none" stroke="#000" stroke-width="1.3">
<path d="M815 119 L830.5 134.5 M830.5 119 L815 134.5"/></svg>
<div class="a" style="left:92px;top:162px;width:267px;height:32px;background:#f0f0f0;border:1px solid #d9d9d9;box-sizing:border-box;"></div>
<div class="a" style="left:179px;top:162px;width:1px;height:32px;background:#d9d9d9;"></div>
<div class="a" style="left:269px;top:162px;width:1px;height:32px;background:#d9d9d9;"></div>
<div class="a" style="left:90px;top:193px;width:755px;height:673px;background:#fff;border:1px solid #d9d9d9;box-sizing:border-box;"></div>
<div class="a" style="left:358px;top:160px;width:94px;height:35px;background:#fff;border:1px solid #d9d9d9;box-sizing:border-box;border-bottom:none;"></div>
<div class="t" style="left:106.68px;top:171px;font-size:16.5px;line-height:16.5px;color:#000;">Number</div>
<div class="t" style="left:208.23px;top:171px;font-size:16.5px;line-height:16.5px;color:#000;transform:scaleX(0.9653);transform-origin:0 0;">Font</div>
<div class="t" style="left:289.71px;top:171px;font-size:16.5px;line-height:16.5px;color:#000;transform:scaleX(0.9805);transform-origin:0 0;">Border</div>
<div class="t" style="left:394.73px;top:170px;font-size:16.5px;line-height:16.5px;color:#000;transform:scaleX(0.9654);transform-origin:0 0;">Fill</div>
<div class="t" style="left:117.75px;top:213px;font-size:16px;line-height:16px;color:#000;transform:scaleX(0.9787);transform-origin:0 0;">Background Color:</div>
<div class="a" style="left:206.5px;top:228px;width:9px;height:1px;background:#000;"></div>
<div class="a" style="left:120px;top:237px;width:269px;height:30px;background:#99d1ff;"></div>
<div class="a" style="left:123px;top:240px;width:263px;height:24px;background:#cce8ff;border:1px solid #8c8c8c;box-sizing:border-box;"></div>
<div class="t" style="left:221.69px;top:245px;font-size:16.5px;line-height:16.5px;color:#000;transform:scaleX(0.9917);transform-origin:0 0;">No Color</div>
<div class="a" style="left:123px;top:275px;width:20px;height:20px;background:#ffffff;border:1px solid #a0a0a0;box-sizing:border-box"></div><div class="a" style="left:150px;top:275px;width:20px;height:20px;background:#000000;border:1px solid #a0a0a0;box-sizing:border-box"></div><div class="a" style="left:177px;top:275px;width:20px;height:20px;background:#e7e6e6;border:1px solid #a0a0a0;box-sizing:border-box"></div><div class="a" style="left:204px;top:275px;width:20px;height:20px;background:#44546a;border:1px solid #a0a0a0;box-sizing:border-box"></div><div class="a" style="left:231px;top:275px;width:20px;height:20px;background:#4472c4;border:1px solid #a0a0a0;box-sizing:border-box"></div><div class="a" style="left:258px;top:275px;width:20px;height:20px;background:#ed7d31;border:1px solid #a0a0a0;box-sizing:border-box"></div><div class="a" style="left:285px;top:275px;width:20px;height:20px;background:#a5a5a5;border:1px solid #a0a0a0;box-sizing:border-box"></div><div class="a" style="left:312px;top:275px;width:20px;height:20px;background:#ffc000;border:1px solid #a0a0a0;box-sizing:border-box"></div><div class="a" style="left:339px;top:275px;width:20px;height:20px;background:#5b9bd5;border:1px solid #a0a0a0;box-sizing:border-box"></div><div class="a" style="left:366px;top:275px;width:20px;height:20px;background:#70ad47;border:1px solid #a0a0a0;box-sizing:border-box"></div><div class="a" style="left:123px;top:311px;width:20px;height:20px;background:#f2f2f2;border:1px solid #a0a0a0;box-sizing:border-box"></div><div class="a" style="left:150px;top:311px;width:20px;height:20px;background:#7f7f7f;border:1px solid #a0a0a0;box-sizing:border-box"></div><div class="a" style="left:177px;top:311px;width:20px;height:20px;background:#d0cece;border:1px solid #a0a0a0;box-sizing:border-box"></div><div class="a" style="left:204px;top:311px;width:20px;height:20px;background:#d6dce4;border:1px solid #a0a0a0;box-sizing:border-box"></div><div class="a" style="left:231px;top:311px;width:20px;height:20px;background:#d9e2f3;border:1px solid #a0a0a0;box-sizing:border-box"></div><div class="a" style="left:258px;top:311px;width:20px;height:20px;background:#fbe5d5;border:1px solid #a0a0a0;box-sizing:border-box"></div><div class="a" style="left:285px;top:311px;width:20px;height:20px;background:#ededed;border:1px solid #a0a0a0;box-sizing:border-box"></div><div class="a" style="left:312px;top:311px;width:20px;height:20px;background:#fff2cc;border:1px solid #a0a0a0;box-sizing:border-box"></div><div class="a" style="left:339px;top:311px;width:20px;height:20px;background:#deebf6;border:1px solid #a0a0a0;box-sizing:border-box"></div><div class="a" style="left:366px;top:311px;width:20px;height:20px;background:#e2efd9;border:1px solid #a0a0a0;box-sizing:border-box"></div><div class="a" style="left:123px;top:336px;width:20px;height:20px;background:#d8d8d8;border:1px solid #a0a0a0;box-sizing:border-box"></div><div class="a" style="left:150px;top:336px;width:20px;height:20px;background:#595959;border:1px solid #a0a0a0;box-sizing:border-box"></div><div class="a" style="left:177px;top:336px;width:20px;height:20px;background:#aeabab;border:1px solid #a0a0a0;box-sizing:border-box"></div><div class="a" style="left:204px;top:336px;width:20px;height:20px;background:#adb9ca;border:1px solid #a0a0a0;box-sizing:border-box"></div><div class="a" style="left:231px;top:336px;width:20px;height:20px;background:#b4c6e7;border:1px solid #a0a0a0;box-sizing:border-box"></div><div class="a" style="left:258px;top:336px;width:20px;height:20px;background:#f7cbac;border:1px solid #a0a0a0;box-sizing:border-box"></div><div class="a" style="left:285px;top:336px;width:20px;height:20px;background:#dbdbdb;border:1px solid #a0a0a0;box-sizing:border-box"></div><div class="a" style="left:312px;top:336px;width:20px;height:20px;background:#fee599;border:1px solid #a0a0a0;box-sizing:border-box"></div><div class="a" style="left:339px;top:336px;width:20px;height:20px;background:#bdd7ee;border:1px solid #a0a0a0;box-sizing:border-box"></div><div class="a" style="left:366px;top:336px;width:20px;height:20px;background:#c5e0b3;border:1px solid #a0a0a0;box-sizing:border-box"></div><div class="a" style="left:123px;top:361px;width:20px;height:20px;background:#bfbfbf;border:1px solid #a0a0a0;box-sizing:border-box"></div><div class="a" style="left:150px;top:361px;width:20px;height:20px;background:#3f3f3f;border:1px solid #a0a0a0;box-sizing:border-box"></div><div class="a" style="left:177px;top:361px;width:20px;height:20px;background:#757070;border:1px solid #a0a0a0;box-sizing:border-box"></div><div class="a" style="left:204px;top:361px;width:20px;height:20px;background:#8496b0;border:1px solid #a0a0a0;box-sizing:border-box"></div><div class="a" style="left:231px;top:361px;width:20px;height:20px;background:#8eaadb;border:1px solid #a0a0a0;box-sizing:border-box"></div><div class="a" style="left:258px;top:361px;width:20px;height:20px;background:#f4b183;border:1px solid #a0a0a0;box-sizing:border-box"></div><div class="a" style="left:285px;top:361px;width:20px;height:20px;background:#c9c9c9;border:1px solid #a0a0a0;box-sizing:border-box"></div><div class="a" style="left:312px;top:361px;width:20px;height:20px;background:#ffd965;border:1px solid #a0a0a0;box-sizing:border-box"></div><div class="a" style="left:339px;top:361px;width:20px;height:20px;background:#9cc3e5;border:1px solid #a0a0a0;box-sizing:border-box"></div><div class="a" style="left:366px;top:361px;width:20px;height:20px;background:#a8d08d;border:1px solid #a0a0a0;box-sizing:border-box"></div><div class="a" style="left:123px;top:386px;width:20px;height:20px;background:#a5a5a5;border:1px solid #a0a0a0;box-sizing:border-box"></div><div class="a" style="left:150px;top:386px;width:20px;height:20px;background:#262626;border:1px solid #a0a0a0;box-sizing:border-box"></div><div class="a" style="left:177px;top:386px;width:20px;height:20px;background:#3a3838;border:1px solid #a0a0a0;box-sizing:border-box"></div><div class="a" style="left:204px;top:386px;width:20px;height:20px;background:#323f4f;border:1px solid #a0a0a0;box-sizing:border-box"></div><div class="a" style="left:231px;top:386px;width:20px;height:20px;background:#2f5496;border:1px solid #a0a0a0;box-sizing:border-box"></div><div class="a" style="left:258px;top:386px;width:20px;height:20px;background:#c55a11;border:1px solid #a0a0a0;box-sizing:border-box"></div><div class="a" style="left:285px;top:386px;width:20px;height:20px;background:#7b7b7b;border:1px solid #a0a0a0;box-sizing:border-box"></div><div class="a" style="left:312px;top:386px;width:20px;height:20px;background:#bf9000;border:1px solid #a0a0a0;box-sizing:border-box"></div><div class="a" style="left:339px;top:386px;width:20px;height:20px;background:#2e75b5;border:1px solid #a0a0a0;box-sizing:border-box"></div><div class="a" style="left:366px;top:386px;width:20px;height:20px;background:#538135;border:1px solid #a0a0a0;box-sizing:border-box"></div><div class="a" style="left:123px;top:411px;width:20px;height:20px;background:#7f7f7f;border:1px solid #a0a0a0;box-sizing:border-box"></div><div class="a" style="left:150px;top:411px;width:20px;height:20px;background:#0c0c0c;border:1px solid #a0a0a0;box-sizing:border-box"></div><div class="a" style="left:177px;top:411px;width:20px;height:20px;background:#171616;border:1px solid #a0a0a0;box-sizing:border-box"></div><div class="a" style="left:204px;top:411px;width:20px;height:20px;background:#222a35;border:1px solid #a0a0a0;box-sizing:border-box"></div><div class="a" style="left:231px;top:411px;width:20px;height:20px;background:#1f3864;border:1px solid #a0a0a0;box-sizing:border-box"></div><div class="a" style="left:258px;top:411px;width:20px;height:20px;background:#833c0b;border:1px solid #a0a0a0;box-sizing:border-box"></div><div class="a" style="left:285px;top:411px;width:20px;height:20px;background:#525252;border:1px solid #a0a0a0;box-sizing:border-box"></div><div class="a" style="left:312px;top:411px;width:20px;height:20px;background:#7f6000;border:1px solid #a0a0a0;box-sizing:border-box"></div><div class="a" style="left:339px;top:411px;width:20px;height:20px;background:#1e4e79;border:1px solid #a0a0a0;box-sizing:border-box"></div><div class="a" style="left:366px;top:411px;width:20px;height:20px;background:#375623;border:1px solid #a0a0a0;box-sizing:border-box"></div><div class="a" style="left:123px;top:447px;width:20px;height:20px;background:#c00000;border:1px solid #a0a0a0;box-sizing:border-box"></div><div class="a" style="left:150px;top:447px;width:20px;height:20px;background:#ff0000;border:1px solid #a0a0a0;box-sizing:border-box"></div><div class="a" style="left:177px;top:447px;width:20px;height:20px;background:#ffc000;border:1px solid #a0a0a0;box-sizing:border-box"></div><div class="a" style="left:204px;top:447px;width:20px;height:20px;background:#ffff00;border:1px solid #a0a0a0;box-sizing:border-box"></div><div class="a" style="left:231px;top:447px;width:20px;height:20px;background:#92d050;border:1px solid #a0a0a0;box-sizing:border-box"></div><div class="a" style="left:258px;top:447px;width:20px;height:20px;background:#00b050;border:1px solid #a0a0a0;box-sizing:border-box"></div><div class="a" style="left:285px;top:447px;width:20px;height:20px;background:#00b0f0;border:1px solid #a0a0a0;box-sizing:border-box"></div><div class="a" style="left:312px;top:447px;width:20px;height:20px;background:#0070c0;border:1px solid #a0a0a0;box-sizing:border-box"></div><div class="a" style="left:339px;top:447px;width:20px;height:20px;background:#002060;border:1px solid #a0a0a0;box-sizing:border-box"></div><div class="a" style="left:366px;top:447px;width:20px;height:20px;background:#7030a0;border:1px solid #a0a0a0;box-sizing:border-box"></div>
<div class="a" style="left:118px;top:302px;width:273px;height:1px;background:#c8c8c8;"></div>
<div class="a" style="left:118px;top:438px;width:273px;height:1px;background:#c8c8c8;"></div>
<div class="a" style="left:118px;top:490px;width:124px;height:36px;background:#e1e1e1;border:1px solid #adadad;box-sizing:border-box;"></div>
<div class="t" style="left:139.81px;top:500.5px;font-size:16px;line-height:16px;color:#000;transform:scaleX(0.9277);transform-origin:0 0;">Fill Effects...</div>
<div class="a" style="left:150px;top:515px;width:4px;height:1px;background:#000;"></div>
<div class="a" style="left:258px;top:490px;width:124px;height:36px;background:#e1e1e1;border:1px solid #adadad;box-sizing:border-box;"></div>
<div class="t" style="left:271.26px;top:500.5px;font-size:16px;line-height:16px;color:#000;transform:scaleX(0.9726);transform-origin:0 0;">More Colors...</div>
<div class="a" style="left:272px;top:515px;width:14px;height:1px;background:#000;"></div>
<div class="t" style="left:482.23px;top:213px;font-size:16px;line-height:16px;color:#000;transform:scaleX(0.9904);transform-origin:0 0;">Pattern Color:</div>
<div class="a" style="left:492px;top:228px;width:8px;height:1px;background:#000;"></div>
<div class="a" style="left:483px;top:235px;width:290px;height:37px;background:#fff;border:1px solid #a0a0a0;box-sizing:border-box;"></div>
<div class="a" style="left:745px;top:237px;width:26px;height:33px;background:#e6e6e6;border:1px solid #b4b4b4;box-sizing:border-box;"></div>
<div class="t" style="left:579.50px;top:246px;font-size:16.5px;line-height:16.5px;color:#000;transform:scaleX(0.9735);transform-origin:0 0;">Automatic</div>
<div class="t" style="left:482.24px;top:281px;font-size:16px;line-height:16px;color:#000;transform:scaleX(0.9863);transform-origin:0 0;">Pattern Style:</div>
<div class="a" style="left:483px;top:294.5px;width:9px;height:1px;background:#000;"></div>
<div class="a" style="left:483px;top:303px;width:290px;height:37px;background:#fff;border:1px solid #a0a0a0;box-sizing:border-box;"></div>
<div class="a" style="left:747px;top:305px;width:25px;height:33px;background:#e6e6e6;border:1px solid #b4b4b4;box-sizing:border-box;"></div>
<svg class="a" style="left:740;top:230" width="40" height="115" viewBox="740 230 40 115" fill="none" stroke="#333" stroke-width="1.2">
<path d="M752.5 251 L757.5 256 L762.5 251"/><path d="M754 319 L759 324 L764 319"/></svg>
<div class="a" style="left:105px;top:685px;width:726px;height:109px;border:1px solid #dcdcdc;box-sizing:border-box;"></div>
<div class="a" style="left:112px;top:676px;width:58px;height:18px;background:#fff;"></div>
<div class="t" style="left:114.80px;top:678px;font-size:16px;line-height:16px;color:#000;transform:scaleX(0.9754);transform-origin:0 0;">Sample</div>
<div class="a" style="left:707px;top:814px;width:124px;height:36px;background:#e1e1e1;border:1px solid #adadad;box-sizing:border-box;"></div>
<div class="t" style="left:750.22px;top:825px;font-size:16px;line-height:16px;color:#000;transform:scaleX(0.9698);transform-origin:0 0;">Clear</div>
<div class="a" style="left:781.5px;top:840px;width:5.5px;height:1px;background:#000;"></div>
<div class="a" style="left:582px;top:880px;width:124px;height:36px;background:#e1e1e1;border:2px solid #0078d7;box-sizing:border-box;"></div>
<div class="t" style="left:632.32px;top:891px;font-size:16px;line-height:16px;color:#000;transform:scaleX(0.9442);transform-origin:0 0;">OK</div>
<div class="a" style="left:722px;top:880px;width:124px;height:36px;background:#e1e1e1;border:1px solid #adadad;box-sizing:border-box;"></div>
<div class="t" style="left:760.75px;top:891px;font-size:16px;line-height:16px;color:#000;transform:scaleX(0.9391);transform-origin:0 0;">Cancel</div>
<div class="a" style="left:66px;top:90px;width:811px;height:853px;border:5px solid #000;box-sizing:border-box;border-radius:6px"></div>
<div class="a" style="left:1158px;top:736px;width:132px;height:57px;border:5px solid #000;box-sizing:border-box;border-radius:7px"></div>
<svg class="a" style="left:860;top:680" width="310" height="100" viewBox="860 680 310 100">
<path d="M1160 762.8 L899 711.5" stroke="#000" stroke-width="5.5" fill="none"/>
<path d="M876.8 707 L906.2 702.9 L901.3 709 L900 714.2 L902.7 721.5 Z" fill="#000"/></svg>
</body></html>
